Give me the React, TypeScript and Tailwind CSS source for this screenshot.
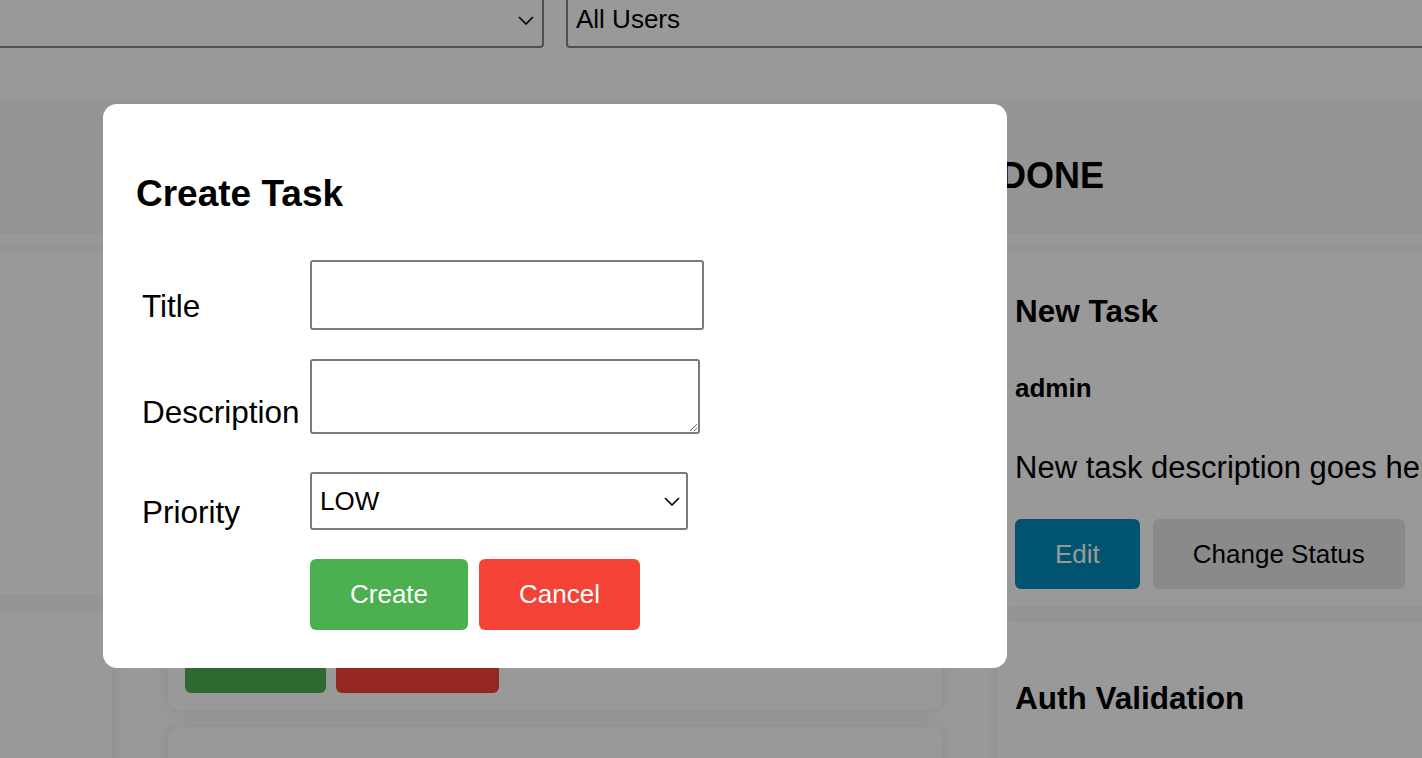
import { useState } from "react"

// small chevron used by the custom selects
const Chevron = ({ className }: { className?: string }) => (
    <svg className={className} width="16" height="9" viewBox="0 0 16 9" fill="none">
        <path d="M1 1l7 7 7-7" stroke="currentColor" strokeWidth="1.6" />
    </svg>
)

interface TaskCardProps {
    title: string
    user: string
    description: string
    className: string
    children: React.ReactNode
}

function TaskCard({ title, user, description, className, children }: TaskCardProps) {
    return (
        <div className={`flex flex-col rounded-xl bg-white px-[17px] pb-[17px] shadow-[0_0_16px_rgba(0,0,0,0.09)] ${className}`}>
            <h3 className="text-[31.5px] font-bold leading-[36px]">{title}</h3>
            <p className="mt-[44px] text-[26px] font-bold leading-[30px]">{user}</p>
            <p className="mt-[47px] text-[31px] leading-[36px] whitespace-nowrap">{description}</p>
            <div className="mt-auto flex">{children}</div>
        </div>
    )
}

export default function App() {
    const [title, setTitle] = useState<string>("")
    const [description, setDescription] = useState<string>("")
    const [priority, setPriority] = useState<string>("LOW")

    return (
        <div className="relative h-[758px] w-full overflow-hidden bg-white font-['Liberation_Sans',Arial,sans-serif] text-black">
            {/* Filters */}
            <div className="-mt-[10px] flex gap-[22px]">
                <div className="relative -ml-[20px] h-[58px] w-[564px] shrink-0 rounded-[4px] border-2 border-[#858585]">
                    <Chevron className="absolute right-[8px] top-[24px]" />
                </div>
                <div className="flex h-[58px] w-[900px] shrink-0 items-center rounded-[4px] border-2 border-[#858585] pl-[8px] text-[26px]">
                    All Users
                </div>
            </div>

            {/* Column headers */}
            <div className="mt-[52px] flex h-[135px] items-center gap-[56px] bg-[#f7f7f7] pl-[2px] pt-[16px] -ml-[662px]">
                <h2 className="w-[774px] shrink-0 text-[36px] font-bold">TODO</h2>
                <h2 className="w-[774px] shrink-0 text-[36px] font-bold">IN PROGRESS</h2>
                <h2 className="w-[774px] shrink-0 text-[36px] font-bold">DONE</h2>
            </div>

            {/* Board */}
            <div className="-ml-[662px] flex gap-[56px] pt-[16px]">
                <div className="flex w-[774px] shrink-0 flex-col gap-[16px]">
                    <div className="h-[344px] rounded-xl bg-white shadow-[0_0_16px_rgba(0,0,0,0.09)]" />
                    <div className="h-[300px] rounded-xl bg-white shadow-[0_0_16px_rgba(0,0,0,0.09)]" />
                </div>

                <div className="flex w-[774px] shrink-0 flex-col gap-[17px]">
                    <TaskCard title="Setup Database" user="admin" description="Create tables" className="h-[459px] pt-[42px]">
                        <button className="h-[70px] w-[141px] rounded-md bg-[#4CAF50] text-[26px] text-white">Edit</button>
                        <button className="ml-[10px] h-[70px] w-[163px] rounded-md bg-[#f44336] text-[26px] text-white">Delete</button>
                    </TaskCard>
                    <div className="h-[300px] rounded-xl bg-white shadow-[0_0_16px_rgba(0,0,0,0.09)]" />
                </div>

                <div className="flex w-[774px] shrink-0 flex-col gap-[16px]">
                    <TaskCard title="New Task" user="admin" description="New task description goes here" className="h-[355px] pt-[42px]">
                        <button className="h-[70px] rounded-md bg-[#008CBA] px-[40px] text-[26px] text-white">Edit</button>
                        <button className="ml-[13px] h-[70px] rounded-md bg-[#e7e7e7] px-[40px] text-[26px] text-black">Change Status</button>
                    </TaskCard>
                    <div className="h-[300px] rounded-xl bg-white px-[17px] pt-[58px] shadow-[0_0_16px_rgba(0,0,0,0.09)]">
                        <h3 className="text-[31.5px] font-bold leading-[36px]">Auth Validation</h3>
                    </div>
                </div>
            </div>

            {/* Overlay */}
            <div className="absolute inset-0 bg-black/40" />

            {/* Create Task modal */}
            <div className="absolute left-[103px] top-[104px] h-[564px] w-[904px] rounded-[14px] bg-white px-[33px] pt-[70px]">
                <h2 className="text-[37px] font-bold leading-[40px]">Create Task</h2>

                <div className="mt-[46px] flex flex-col pl-[6px]">
                    <div className="flex items-start">
                        <label className="mt-[28px] w-[168px] shrink-0 text-[31.5px] leading-[36px]">Title</label>
                        <input
                            value={title}
                            onChange={(e) => setTitle(e.target.value)}
                            className="h-[70px] w-[394px] rounded-[3px] border-2 border-[#7a7a7a] px-[8px] text-[26px] outline-none"
                        />
                    </div>

                    <div className="mt-[29px] flex items-start">
                        <label className="mt-[35px] w-[168px] shrink-0 text-[31.5px] leading-[36px]">Description</label>
                        <textarea
                            value={description}
                            onChange={(e) => setDescription(e.target.value)}
                            className="h-[75px] w-[390px] rounded-[3px] border-2 border-[#7a7a7a] px-[8px] text-[26px] outline-none"
                        />
                    </div>

                    <div className="mt-[38px] flex items-start">
                        <label className="mt-[22px] w-[168px] shrink-0 text-[31.5px] leading-[36px]">Priority</label>
                        <div className="relative">
                            <select
                                value={priority}
                                onChange={(e) => setPriority(e.target.value)}
                                className="h-[58px] w-[378px] appearance-none rounded-[3px] border-2 border-[#7a7a7a] bg-white pl-[8px] text-[26px] outline-none"
                            >
                                <option>LOW</option>
                                <option>MEDIUM</option>
                                <option>HIGH</option>
                            </select>
                            <Chevron className="pointer-events-none absolute right-[8px] top-[25px]" />
                        </div>
                    </div>

                    <div className="mt-[29px] flex gap-[11px] pl-[168px]">
                        <button className="h-[71px] rounded-md bg-[#4CAF50] px-[40px] text-[26px] text-white">Create</button>
                        <button className="h-[71px] rounded-md bg-[#f44336] px-[40px] text-[26px] text-white">Cancel</button>
                    </div>
                </div>
            </div>
        </div>
    )
}
